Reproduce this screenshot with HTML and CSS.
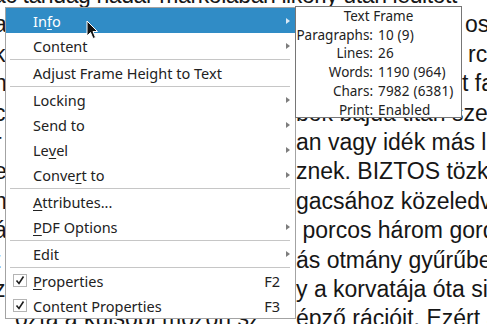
FILE: index.html
```html
<!DOCTYPE html>
<html lang="hu">
<head>
    <meta charset="UTF-8">
    <title>Text Frame context menu</title>
    <link rel="stylesheet" href="styles.css">
</head>
<body>
    <div class="page">
        <div class="line first">ác tahdag nadar markolaban likorly útan leditott</div>
        <div class="line"><span class="lead">a</span><span class="tail far-1">os</span></div>
        <div class="line"><span class="lead">k</span><span class="tail far-2">rc</span></div>
        <div class="line"><span class="lead">n</span><span class="tail far-3">t fa</span></div>
        <div class="line"><span class="lead">c</span><span class="tail">bok bajdá titan szel</span></div>
        <div class="line"><span class="lead">r</span><span class="tail">an vagy idék más l</span></div>
        <div class="line"><span class="lead">e</span><span class="tail">znek. BIZTOS tözk</span></div>
        <div class="line"><span class="lead">n</span><span class="tail">gacsához közeledv</span></div>
        <div class="line"><span class="lead">á</span><span class="tail">&nbsp;porcos három gord</span></div>
        <div class="line"><span class="lead">t</span><span class="tail">ás otmány gyűrűbe</span></div>
        <div class="line"><span class="lead">z</span><span class="tail">y a korvatája óta sil</span></div>
        <div class="line"><span class="lead last">ózta a kulsőbl mozon sz</span><span class="tail">épző rációit. Ezért a</span></div>
    </div>

    <div class="menu">
        <div class="item active sub">In<u>f</u>o</div>
        <div class="item sub">Content</div>
        <div class="sep"></div>
        <div class="item">Adjust Frame Height to Text</div>
        <div class="sep"></div>
        <div class="item sub">Locking</div>
        <div class="item sub">Send to</div>
        <div class="item sub">Le<u>v</u>el</div>
        <div class="item sub">Conve<u>r</u>t to</div>
        <div class="sep"></div>
        <div class="item"><u>A</u>ttributes...</div>
        <div class="item sub"><u>P</u>DF Options</div>
        <div class="sep"></div>
        <div class="item sub">Edit</div>
        <div class="sep"></div>
        <div class="item check">
            <span class="box"><svg viewBox="0 0 12 11" width="12" height="11"><polyline points="2.5,5.5 5,8.5 9.5,1.5" /></svg></span>
            <u>P</u>roperties<span class="key">F2</span>
        </div>
        <div class="item check">
            <span class="box"><svg viewBox="0 0 12 11" width="12" height="11"><polyline points="2.5,5.5 5,8.5 9.5,1.5" /></svg></span>
            Content Properties<span class="key">F3</span>
        </div>
    </div>

    <div class="tip">
        <div class="tip-title">Text Frame</div>
        <div class="tip-grid">
            <span class="name">Paragraphs:</span><span>10 (9)</span>
            <span class="name">Lines:</span><span>26</span>
            <span class="name">Words:</span><span>1190 (964)</span>
            <span class="name">Chars:</span><span>7982 (6381)</span>
            <span class="name">Print:</span><span>Enabled</span>
        </div>
    </div>

    <svg class="cursor" viewBox="0 0 13 20" width="13" height="20">
        <path d="M1 1 L1 16 L4.5 12.5 L7 18.5 L9.5 17.5 L7 11.5 L11.5 11.5 Z" />
    </svg>
</body>
</html>
```

FILE: styles.css
```css
body {
    margin: 0;
    height: 324px;
    overflow: hidden;
    background: white;
}
.page {
    margin: -19.1px 0 0 -6px;
    font-family: "Liberation Sans", Arial, sans-serif;
    font-size: 23px;
    line-height: 29.4px;
    color: #161616;
    white-space: nowrap;
}
.line {
    display: flex;
}
.first {
    margin-left: -1px;
    letter-spacing: -0.4px;
}
.lead {
    flex: 0 0 302px;
    overflow: hidden;
}
.lead.last {
    box-sizing: border-box;
    padding-left: 21px;
}
.far-1 {
    padding-left: 169px;
}
.far-2 {
    padding-left: 172px;
}
.far-3 {
    padding-left: 166px;
}

.menu {
    position: absolute;
    left: 5px;
    top: 7px;
    width: 289px;
    background: white;
    border: 1px solid #a3a3a3;
    font-family: "Noto Sans", sans-serif;
    font-size: 14.5px;
    color: #222;
}
.item {
    display: flex;
    align-items: center;
    height: 25px;
    padding-left: 27px;
    white-space: nowrap;
}
.item u {
    text-decoration-thickness: 1px;
    text-underline-offset: 2px;
}
.sub::after {
    content: "";
    margin-left: auto;
    margin-right: 5px;
    border-left: 4px solid #7d7d7d;
    border-top: 3.5px solid transparent;
    border-bottom: 3.5px solid transparent;
}
.active {
    background: #308cc6;
    color: white;
}
.active::after {
    border-left-color: #dbe9f5;
}
.sep {
    height: 1px;
    margin: 1px 5px 0 4px;
    background: #c6c6c6;
}
.check {
    padding-left: 7px;
}
.box {
    display: flex;
    align-items: center;
    justify-content: center;
    box-sizing: border-box;
    width: 14px;
    height: 13px;
    margin-right: 6px;
    border: 1px solid #b4b4b4;
    background: white;
}
.box polyline {
    fill: none;
    stroke: #1e1e1e;
    stroke-width: 1.6;
}
.key {
    margin-left: auto;
    margin-right: 15px;
}

.tip {
    position: absolute;
    left: 295px;
    top: 6px;
    width: 165px;
    height: 110px;
    overflow: hidden;
    background: white;
    border: 1px solid #767676;
    font-family: "Noto Sans", sans-serif;
    font-size: 13.5px;
    line-height: 18.7px;
    color: #222;
    white-space: nowrap;
}
.tip-title {
    text-align: center;
}
.tip-grid {
    display: grid;
    grid-template-columns: 77px auto;
    column-gap: 5px;
    letter-spacing: 0.2px;
}
.name {
    text-align: right;
    letter-spacing: 0;
}

.cursor {
    position: absolute;
    left: 86px;
    top: 20px;
}
.cursor path {
    fill: #111;
    stroke: white;
    stroke-width: 1;
    stroke-linejoin: round;
}
```
